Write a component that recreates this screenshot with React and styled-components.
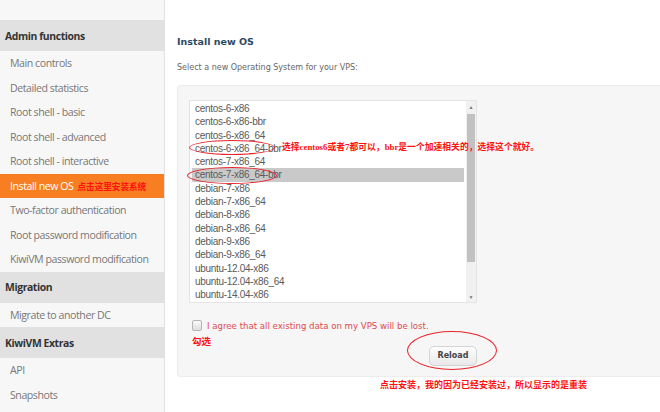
import React from 'react';
import styled, { createGlobalStyle } from 'styled-components';

const GlobalStyle = createGlobalStyle`
  html, body {
    margin: 0;
    padding: 0;
    background: #fff;
  }
  body {
    width: 660px;
    height: 412px;
    overflow: hidden;
    font-family: 'Open Sans', 'Liberation Sans', sans-serif;
  }
`;

const menu = [
  {
    title: 'Admin functions',
    items: [
      'Main controls',
      'Detailed statistics',
      'Root shell - basic',
      'Root shell - advanced',
      'Root shell - interactive',
      'Install new OS',
      'Two-factor authentication',
      'Root password modification',
      'KiwiVM password modification',
    ],
  },
  { title: 'Migration', items: ['Migrate to another DC'] },
  { title: 'KiwiVM Extras', items: ['API', 'Snapshots'] },
];

const osList = [
  'centos-6-x86',
  'centos-6-x86-bbr',
  'centos-6-x86_64',
  'centos-6-x86_64-bbr',
  'centos-7-x86_64',
  'centos-7-x86_64-bbr',
  'debian-7-x86',
  'debian-7-x86_64',
  'debian-8-x86',
  'debian-8-x86_64',
  'debian-9-x86',
  'debian-9-x86_64',
  'ubuntu-12.04-x86',
  'ubuntu-12.04-x86_64',
  'ubuntu-14.04-x86',
  'ubuntu-14.04-x86_64',
];

const App = () => {
  return (
    <>
      <GlobalStyle />
      <Page>
        <Sidebar>
          {menu.map((group) => (
            <Group key={group.title}>
              <GroupTitle>{group.title}</GroupTitle>
              {group.items.map((item) => (
                <MenuItem key={item} active={item === 'Install new OS'}>
                  {item}
                  {item === 'Install new OS' && <SideNote>点击这里安装系统</SideNote>}
                </MenuItem>
              ))}
            </Group>
          ))}
        </Sidebar>
        <Main>
          <Heading>Install new OS</Heading>
          <SubHeading>Select a new Operating System for your VPS:</SubHeading>
          <Well>
            <FormColumn>
              <ListWrap>
                <Listbox>
                  <Options>
                    {osList.map((os, i) => (
                      <Option key={os} selected={i === 5}>
                        {os}
                      </Option>
                    ))}
                  </Options>
                  <Scrollbar>
                    <Arrow>▲</Arrow>
                    <Track>
                      <Thumb />
                    </Track>
                    <Arrow>▼</Arrow>
                  </Scrollbar>
                </Listbox>
                <Ring style={{ left: 0, top: 40, width: 86, height: 15 }} />
                <Ring style={{ left: -2, top: 67, width: 90, height: 17 }} />
                <ListNote>
                  选择centos6或者7都可以，bbr是一个加速相关的，选择这个就好。
                </ListNote>
              </ListWrap>
              <AgreeRow>
                <Checkbox />
                <AgreeText>I agree that all existing data on my VPS will be lost.</AgreeText>
              </AgreeRow>
              <ActionRow>
                <Note>勾选</Note>
                <ButtonWrap>
                  <ReloadButton>Reload</ReloadButton>
                  <ButtonRing />
                </ButtonWrap>
              </ActionRow>
            </FormColumn>
          </Well>
          <BottomNote>点击安装，我的因为已经安装过，所以显示的是重装</BottomNote>
        </Main>
      </Page>
    </>
  );
};

const Page = styled.div`
  display: flex;
  width: 660px;
  height: 412px;
`;

const Sidebar = styled.nav`
  width: 165px;
  flex-shrink: 0;
  background: #f7f7f7;
  border-right: 1px solid #e2e2e2;
  padding-top: 20px;
  box-sizing: border-box;
`;

const Group = styled.div`
  display: flex;
  flex-direction: column;
`;

const GroupTitle = styled.div`
  height: 31px;
  display: flex;
  align-items: center;
  padding-left: 5px;
  background: #e1e1e1;
  color: #333;
  font-weight: 700;
  font-size: 10.4px;
  letter-spacing: -0.4px;
`;

const MenuItem = styled.div`
  height: 24.5px;
  display: flex;
  align-items: center;
  padding-left: 10px;
  font-size: 10.6px;
  letter-spacing: -0.45px;
  color: ${(p) => (p.active ? '#fff' : '#777')};
  background: ${(p) => (p.active ? '#f77f22' : 'transparent')};
  white-space: nowrap;
`;

const redCjk = `
  color: #ff1010;
  font-weight: 700;
  font-family: 'Liberation Serif', 'Noto Sans CJK SC', serif;
  white-space: nowrap;
`;

const SideNote = styled.span`
  ${redCjk}
  font-size: 8.6px;
  letter-spacing: 0;
  margin-left: 4px;
`;

const Main = styled.main`
  flex: 1;
  padding: 35px 0 0 12px;
  display: flex;
  flex-direction: column;
`;

const Heading = styled.h1`
  margin: 0;
  font-family: 'DejaVu Sans', sans-serif;
  font-size: 9.5px;
  line-height: 14px;
  font-weight: 700;
  color: #2d4963;
`;

const SubHeading = styled.p`
  margin: 13px 0 0;
  font-family: 'DejaVu Sans', sans-serif;
  font-size: 8px;
  line-height: 12px;
  color: #666;
`;

const Well = styled.section`
  margin-top: 11px;
  height: 292px;
  background: #f6f6f6;
  border: 1px solid #ececec;
  border-right: none;
  border-radius: 4px 0 0 4px;
  padding: 14px 0 0 11px;
  box-sizing: border-box;
`;

const FormColumn = styled.div`
  width: 288px;
  display: flex;
  flex-direction: column;
`;

const ListWrap = styled.div`
  position: relative;
`;

const Listbox = styled.div`
  height: 203px;
  display: flex;
  background: #fff;
  border: 1px solid #e4e4e4;
  box-sizing: border-box;
  overflow: hidden;
`;

const Options = styled.ul`
  flex: 1;
  list-style: none;
  margin: 0;
  padding: 1px 2px 0 2px;
  overflow: hidden;
`;

const Option = styled.li`
  height: 13.3px;
  line-height: 13.3px;
  padding-left: 3px;
  font-family: 'Liberation Sans', sans-serif;
  font-size: 10px;
  letter-spacing: -0.3px;
  color: #5a5a5a;
  background: ${(p) => (p.selected ? '#c9c9c9' : 'transparent')};
  white-space: nowrap;
`;

const Scrollbar = styled.div`
  width: 10px;
  display: flex;
  flex-direction: column;
  background: #f1f1f1;
`;

const Arrow = styled.div`
  height: 11px;
  font-size: 5px;
  color: #777;
  display: flex;
  align-items: center;
  justify-content: center;
`;

const Track = styled.div`
  flex: 1;
  padding: 2px 0;
  display: flex;
  flex-direction: column;
`;

const Thumb = styled.div`
  height: 148px;
  margin: 0 1px;
  background: #c1c1c1;
`;

const Ring = styled.div`
  position: absolute;
  border: 1.5px solid #e8252a;
  border-radius: 50%;
  box-sizing: border-box;
`;

const ListNote = styled.div`
  ${redCjk}
  position: absolute;
  left: 93px;
  top: 41px;
  font-size: 8.8px;
  line-height: 12px;
`;

const AgreeRow = styled.label`
  display: flex;
  align-items: center;
  gap: 5px;
  margin-top: 17px;
  padding-left: 3px;
`;

const Checkbox = styled.span`
  width: 8px;
  height: 9px;
  border: 1px solid #b5b5b5;
  border-radius: 2px;
  background: linear-gradient(#fafafa, #dedede);
`;

const AgreeText = styled.span`
  font-family: 'DejaVu Sans', sans-serif;
  font-size: 8.6px;
  color: #dd4a4e;
  white-space: nowrap;
`;

const ActionRow = styled.div`
  display: flex;
  justify-content: space-between;
  align-items: flex-start;
  margin-top: 5px;
`;

const Note = styled.span`
  ${redCjk}
  font-size: 9.5px;
  line-height: 12px;
  padding-left: 3px;
`;

const ButtonWrap = styled.div`
  position: relative;
  margin-top: 5px;
`;

const ReloadButton = styled.button`
  width: 48px;
  height: 20px;
  padding: 0;
  border: 1px solid #d4d4d4;
  border-radius: 5px;
  background: linear-gradient(#fdfdfd, #e9e9e9);
  font-family: 'DejaVu Sans', sans-serif;
  font-size: 8px;
  font-weight: 700;
  color: #444;
`;

const ButtonRing = styled.div`
  position: absolute;
  left: -22px;
  top: -10px;
  width: 90px;
  height: 39px;
  border: 1.5px solid #e8252a;
  border-radius: 50%;
  box-sizing: border-box;
`;

const BottomNote = styled.div`
  ${redCjk}
  font-size: 9px;
  line-height: 12px;
  margin: 2px 0 0 203px;
`;

export default App;
